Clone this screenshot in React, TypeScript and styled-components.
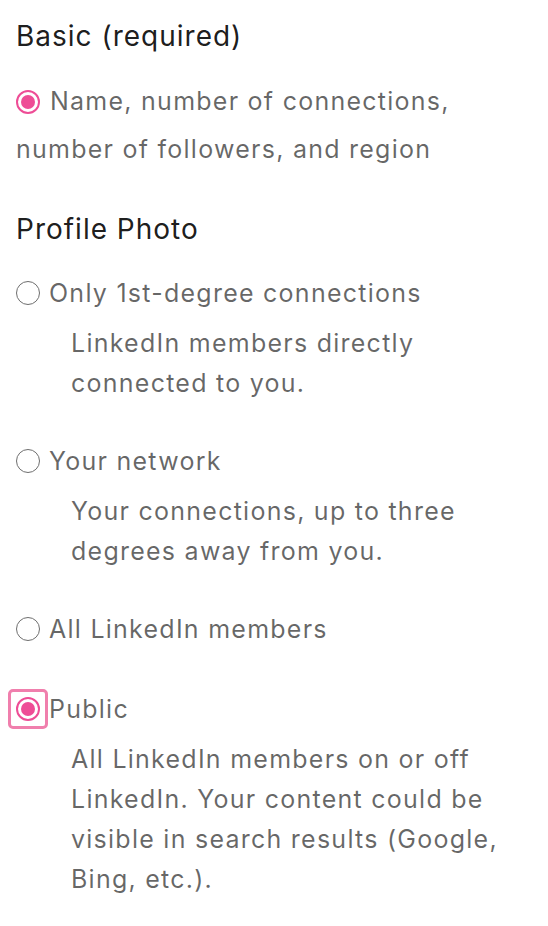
import React from 'react'
import styled, { createGlobalStyle } from 'styled-components'

const GlobalStyle = createGlobalStyle`
  html, body {
    margin: 0;
    padding: 0;
    background: #ffffff;
  }
  body {
    font-family: Inter, "Noto Sans", "Liberation Sans", sans-serif;
    -webkit-font-smoothing: antialiased;
  }
`

const Page = styled.div`
  padding: 16px 16px 24px 16px;
`

const SectionTitle = styled.h2`
  margin: 0;
  font-size: 28px;
  line-height: 40px;
  font-weight: 400;
  color: rgba(0, 0, 0, 0.9);
  letter-spacing: 1px;
`

const BasicText = styled.p`
  margin: 21px 0 36px 0;
  font-size: 25px;
  line-height: 48px;
  letter-spacing: 1.25px;
  color: rgba(0, 0, 0, 0.6);
`

const OptionList = styled.div`
  display: flex;
  flex-direction: column;
  gap: 32px;
  margin-top: 20px;
`

const Option = styled.div``

const OptionRow = styled.label`
  display: flex;
  align-items: center;
  height: 48px;
  gap: 9px;
  font-size: 25px;
  letter-spacing: 1.25px;
  color: rgba(0, 0, 0, 0.6);
`

const Radio = styled.span<{ checked?: boolean; focused?: boolean }>`
  position: relative;
  display: inline-block;
  flex: none;
  box-sizing: border-box;
  width: 24px;
  height: 24px;
  border-radius: 50%;
  border: ${(p) => (p.checked ? '2.5px solid #ee4d96' : '1.6px solid #6e6e6e')};
  background: #fff;

  &::after {
    content: '';
    display: ${(p) => (p.checked ? 'block' : 'none')};
    position: absolute;
    inset: 3px;
    border-radius: 50%;
    background: #ee4d96;
  }

  &::before {
    content: '';
    display: ${(p) => (p.focused ? 'block' : 'none')};
    position: absolute;
    inset: -10px;
    border: 3px solid #f07fad;
    border-radius: 5px;
  }
`

const InlineRadio = styled(Radio)`
  display: inline-block;
  vertical-align: -4px;
  margin-right: 10px;
`

const Description = styled.p`
  margin: 6px 0 2px 55px;
  max-width: 440px;
  font-size: 25px;
  line-height: 40px;
  letter-spacing: 1.25px;
  color: rgba(0, 0, 0, 0.6);
`

interface OptionProps {
  label: string
  description?: string
  checked?: boolean
  focused?: boolean
}

const PhotoOption = ({ label, description, checked, focused }: OptionProps) => (
  <Option>
    <OptionRow>
      <Radio checked={checked} focused={focused} />
      <span>{label}</span>
    </OptionRow>
    {description && <Description>{description}</Description>}
  </Option>
)

export default function App() {
  return (
    <Page>
      <GlobalStyle />
      <SectionTitle>Basic (required)</SectionTitle>
      <BasicText>
        <InlineRadio checked />
        Name, number of connections, number of followers, and region
      </BasicText>
      <SectionTitle>Profile Photo</SectionTitle>
      <OptionList>
        <PhotoOption
          label="Only 1st-degree connections"
          description="LinkedIn members directly connected to you."
        />
        <PhotoOption
          label="Your network"
          description="Your connections, up to three degrees away from you."
        />
        <PhotoOption label="All LinkedIn members" />
        <PhotoOption
          label="Public"
          checked
          focused
          description="All LinkedIn members on or off LinkedIn. Your content could be visible in search results (Google, Bing, etc.)."
        />
      </OptionList>
    </Page>
  )
}
